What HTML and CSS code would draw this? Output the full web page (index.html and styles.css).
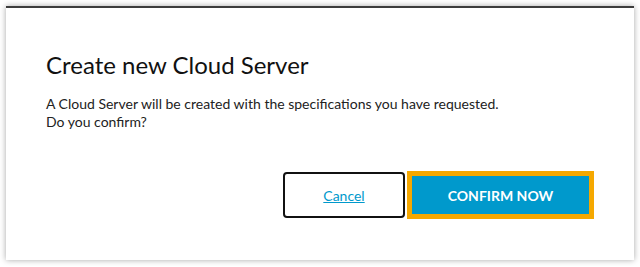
FILE: index.html
```html
<!DOCTYPE html>
<html lang="en">
<head>
    <meta charset="UTF-8">
    <title>Create new Cloud Server</title>
    <link rel="stylesheet" href="styles.css">
</head>
<body>
    <div class="dialog">
        <h2 class="dialog-title">Create new Cloud Server</h2>
        <p class="dialog-text">A Cloud Server will be created with the specifications you have requested.<br>Do you confirm?</p>
        <div class="dialog-actions">
            <button class="btn-cancel"><a href="#">Cancel</a></button>
            <button class="btn-confirm">CONFIRM NOW</button>
        </div>
    </div>
</body>
</html>
```

FILE: styles.css
```css
body {
    margin: 0;
    padding: 6px;
    background: #fff;
    font-family: Lato, "Open Sans", sans-serif;
    color: #1a1a1a;
}
.dialog {
    box-sizing: border-box;
    width: 628px;
    height: 254px;
    background: #fff;
    border-top: 2px solid #3c3c3c;
    box-shadow: 0 0 6px rgba(0,0,0,0.35);
    padding: 43px 40px 0 40px;
}
.dialog-title {
    margin: 0;
    font-size: 24px;
    font-weight: normal;
    line-height: 28px;
    color: #111;
}
.dialog-text {
    margin: 16px 0 0 0;
    font-size: 14px;
    line-height: 18px;
    color: #222;
}
.dialog-actions {
    display: flex;
    justify-content: flex-end;
    align-items: center;
    gap: 7px;
    margin-top: 41px;
}
.btn-cancel {
    width: 122px;
    height: 46px;
    background: #fff;
    border: 2px solid #111;
    border-radius: 4px;
    font-family: inherit;
    font-size: 14px;
    cursor: pointer;
}
.btn-cancel a {
    color: #0099cc;
    text-decoration: underline;
}
.btn-confirm {
    width: 177px;
    height: 38px;
    background: #0099cc;
    border: none;
    outline: 5px solid #f5a800;
    color: #fff;
    font-family: inherit;
    font-size: 14px;
    font-weight: bold;
    margin-right: 5px;
    cursor: pointer;
}
```
